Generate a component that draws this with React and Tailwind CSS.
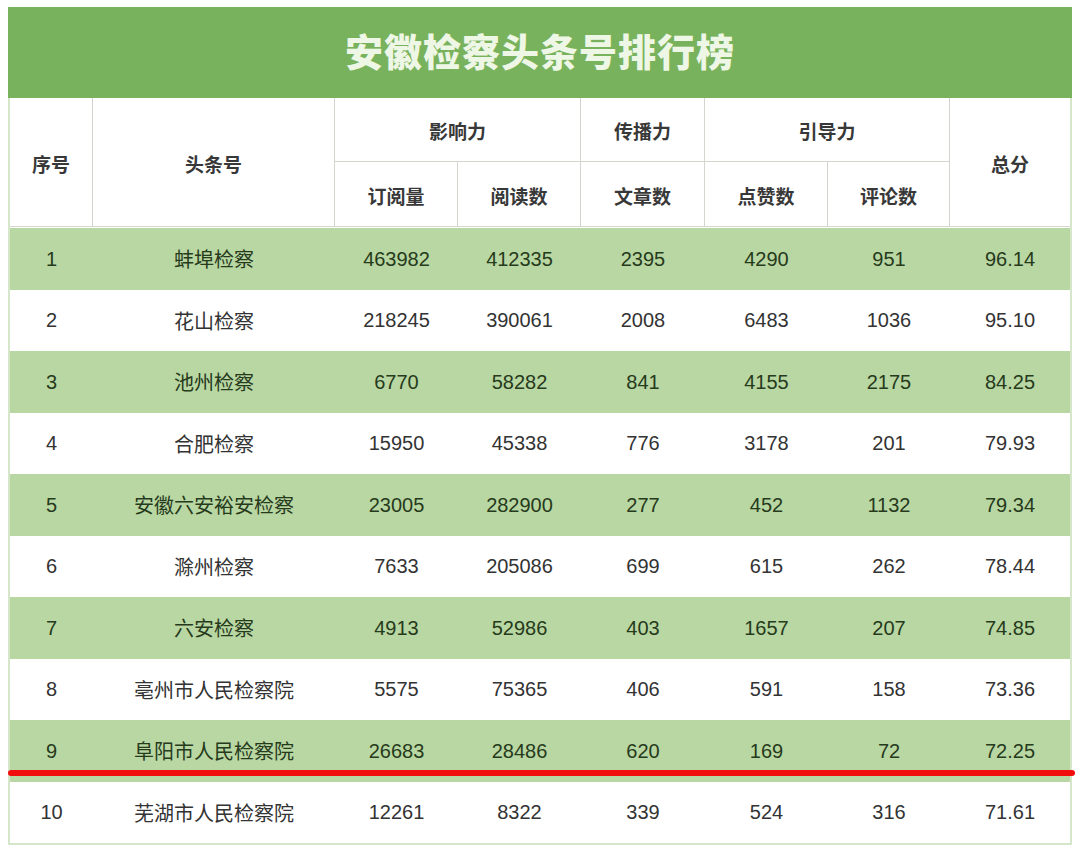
import React from "react";

const rows = [
  ["1", "蚌埠检察", "463982", "412335", "2395", "4290", "951", "96.14"],
  ["2", "花山检察", "218245", "390061", "2008", "6483", "1036", "95.10"],
  ["3", "池州检察", "6770", "58282", "841", "4155", "2175", "84.25"],
  ["4", "合肥检察", "15950", "45338", "776", "3178", "201", "79.93"],
  ["5", "安徽六安裕安检察", "23005", "282900", "277", "452", "1132", "79.34"],
  ["6", "滁州检察", "7633", "205086", "699", "615", "262", "78.44"],
  ["7", "六安检察", "4913", "52986", "403", "1657", "207", "74.85"],
  ["8", "亳州市人民检察院", "5575", "75365", "406", "591", "158", "73.36"],
  ["9", "阜阳市人民检察院", "26683", "28486", "620", "169", "72", "72.25"],
  ["10", "芜湖市人民检察院", "12261", "8322", "339", "524", "316", "71.61"],
];

const cols = "grid-cols-[83px_242px_123px_123px_124px_123px_122px_120px]";
const font = { fontFamily: '"Liberation Sans", "Noto Sans CJK SC", sans-serif' };

function H({ children, className = "" }) {
  return (
    <div
      className={
        "flex items-center justify-center border-[#d2d6cf] pt-[8px] text-[19px] font-bold text-[#383838] " +
        className
      }
    >
      {children}
    </div>
  );
}

export default function App() {
  return (
    <div className="relative h-[853px] w-[1080px] overflow-hidden bg-white" style={font}>
      <div className="pl-[8px] pt-[7px]">
        <div className="w-[1064px]">
          <div className="flex h-[91px] items-center justify-center bg-[#79b25c] pb-[6px]">
            <span
              className="text-[38px] font-black tracking-[1px] text-[#eef7e6]"
              style={{ fontFamily: '"Noto Sans CJK SC", sans-serif' }}
            >
              安徽检察头条号排行榜
            </span>
          </div>
          <div className="border-x-2 border-b-2 border-[#d6e6ca]">
            <div className={"grid grid-rows-[64px_64px] border-b border-[#d2d6cf] " + cols}>
              <H className="row-span-2 border-r">序号</H>
              <H className="row-span-2 border-r">头条号</H>
              <H className="col-span-2 border-r border-b">影响力</H>
              <H className="border-r border-b">传播力</H>
              <H className="col-span-2 border-r border-b">引导力</H>
              <H className="row-span-2">总分</H>
              <H className="border-r">订阅量</H>
              <H className="border-r">阅读数</H>
              <H className="border-r">文章数</H>
              <H className="border-r">点赞数</H>
              <H className="border-r">评论数</H>
            </div>
            <div className="pt-px">
              {rows.map((r, i) => (
                <div
                  key={r[0]}
                  className={
                    "grid h-[61.5px] items-center text-center text-[20px] " +
                    cols +
                    (i % 2 === 0 ? " bg-[#b9d7a2] text-[#263a1c]" : " bg-white text-[#333333]")
                  }
                >
                  {r.map((c, j) => (
                    <div key={j} className={j === 1 ? "pt-[3px] text-[20px]" : ""}>
                      {c}
                    </div>
                  ))}
                </div>
              ))}
            </div>
          </div>
        </div>
      </div>
      <div className="absolute left-[8px] top-[770px] h-[6px] w-[1067px] rounded-full bg-[#f20d0d]" />
    </div>
  );
}
